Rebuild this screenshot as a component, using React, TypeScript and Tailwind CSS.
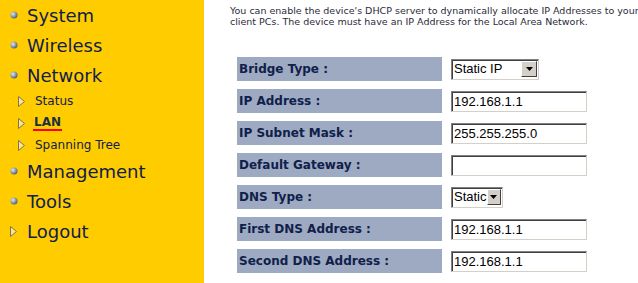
import React from 'react';

const mainItems = [
  { label: 'System' },
  { label: 'Wireless' },
  { label: 'Network' },
];

const subItems = [
  { label: 'Status', active: false },
  { label: 'LAN', active: true },
  { label: 'Spanning Tree', active: false },
];

const Ball = () => (
  <svg width="8" height="8" viewBox="0 0 8 8" className="shrink-0">
    <defs>
      <radialGradient id="ball" cx="35%" cy="35%" r="70%">
        <stop offset="0%" stopColor="#e4e8f0" />
        <stop offset="55%" stopColor="#8e9bb0" />
        <stop offset="100%" stopColor="#4e5a70" />
      </radialGradient>
    </defs>
    <circle cx="4" cy="4" r="3.5" fill="url(#ball)" />
  </svg>
);

const Arrow = () => (
  <svg width="7" height="11" viewBox="0 0 7 11" className="shrink-0">
    <path d="M0.5 0.5 L6.5 5.5 L0.5 10.5 Z" fill="#ffe680" stroke="#7a7460" strokeWidth="1" />
  </svg>
);

const MainLink = ({ label, arrow }: { label: string; arrow?: boolean }) => (
  <div className="flex items-center h-[30px]">
    <div className="w-[27px] pl-[10px] flex items-center">{arrow ? <Arrow /> : <Ball />}</div>
    <span className="text-[18px] text-[#10204a]">{label}</span>
  </div>
);

const TextBox = ({ value }: { value: string }) => (
  <div className="w-[136px] h-[21px] bg-white border border-t-[#808080] border-l-[#808080] border-r-[#d4d0c8] border-b-[#d4d0c8] shadow-[inset_1px_1px_0_#404040] pl-[2px] pt-[1px] text-[13px] leading-[17px] text-black font-['Liberation_Sans',Arial,sans-serif]">
    {value}
  </div>
);

const SelectBox = ({ value, width }: { value: string; width: string }) => (
  <div className={`${width} h-[21px] bg-white border border-t-[#808080] border-l-[#808080] border-r-[#d4d0c8] border-b-[#d4d0c8] shadow-[inset_1px_1px_0_#404040] flex items-center justify-between pl-[2px] pr-[1px] text-[13px] text-black font-['Liberation_Sans',Arial,sans-serif]`}>
    <span>{value}</span>
    <div className="w-[16px] h-[16px] bg-[#d4d0c8] border border-t-[#ffffff] border-l-[#ffffff] border-r-[#404040] border-b-[#404040] flex items-center justify-center">
      <svg width="7" height="4" viewBox="0 0 7 4">
        <path d="M0 0 H7 L3.5 4 Z" fill="#000" />
      </svg>
    </div>
  </div>
);

const rows: { label: string; field: React.ReactNode }[] = [
  { label: 'Bridge Type :', field: <SelectBox value="Static IP" width="w-[88px]" /> },
  { label: 'IP Address :', field: <TextBox value="192.168.1.1" /> },
  { label: 'IP Subnet Mask :', field: <TextBox value="255.255.255.0" /> },
  { label: 'Default Gateway :', field: <TextBox value="" /> },
  { label: 'DNS Type :', field: <SelectBox value="Static" width="w-[52px]" /> },
  { label: 'First DNS Address :', field: <TextBox value="192.168.1.1" /> },
  { label: 'Second DNS Address :', field: <TextBox value="192.168.1.1" /> },
];

export default function App() {
  return (
    <div className="w-[638px] h-[283px] flex bg-white overflow-hidden font-['DejaVu_Sans',Verdana,sans-serif]">
      {/* Sidebar */}
      <div className="w-[204px] shrink-0 bg-[#ffcc00]">
        {mainItems.map((m) => (
          <MainLink key={m.label} label={m.label} />
        ))}
        {subItems.map((s) => (
          <div key={s.label} className="flex items-center h-[22px]">
            <div className="w-[35px] pl-[10px] flex items-center gap-[7px]">
              <span className="w-[1px] h-[1px] bg-[#e8e0c0]" />
              <Arrow />
            </div>
            {s.active ? (
              <span className="text-[12px] font-bold text-[#1a3040] border-b-2 border-[#ff0000] leading-[14px] -ml-[2px] px-[1px]">
                {s.label}
              </span>
            ) : (
              <span className="text-[12px] text-[#10204a]">{s.label}</span>
            )}
          </div>
        ))}
        <MainLink label="Management" />
        <MainLink label="Tools" />
        <MainLink label="Logout" arrow />
      </div>

      {/* Content */}
      <div className="flex-1 pl-[26px] pt-[5px]">
        <p className="text-[9.5px] leading-[11px] text-[#2a2a3a] w-[410px]">
          You can enable the device's DHCP server to dynamically allocate IP Addresses to your client PCs. The
          device must have an IP Address for the Local Area Network.
        </p>
        <div className="mt-[30px] ml-[7px] flex flex-col gap-[8px]">
          {rows.map((r) => (
            <div key={r.label} className="flex items-center h-[24px]">
              <div className="w-[205px] h-[24px] bg-[#9daac2] flex items-center pl-[2px] text-[12px] font-bold text-[#10204a]">
                {r.label}
              </div>
              <div className="ml-[9px]">{r.field}</div>
            </div>
          ))}
        </div>
      </div>
    </div>
  );
}
